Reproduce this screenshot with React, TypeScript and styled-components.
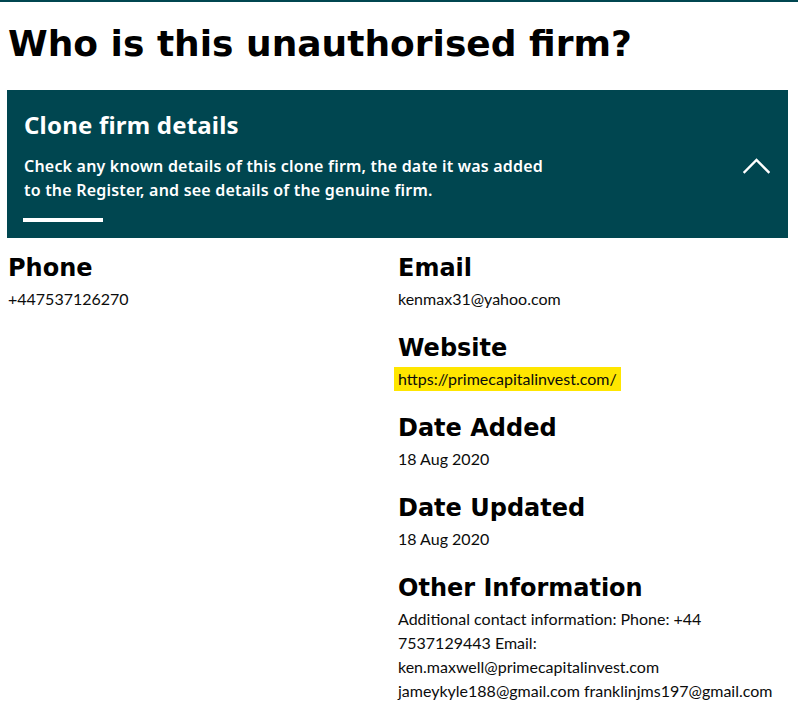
import styled, { createGlobalStyle } from "styled-components";

const GlobalStyle = createGlobalStyle`
  html, body {
    margin: 0;
    padding: 0;
    background: #ffffff;
  }
  body {
    border-top: 2px solid #004650;
    padding: 0 8px;
    font-family: "Lato", "Liberation Sans", sans-serif;
    color: #0b0c0c;
  }
`;

const Page = styled.main`
  display: flex;
  flex-direction: column;
`;

const Title = styled.h1`
  font-family: "DejaVu Sans", Verdana, sans-serif;
  font-weight: 700;
  font-size: 36px;
  line-height: 44px;
  color: #000;
  margin: 20px 0 24px;
`;

const Panel = styled.section`
  background: #004650;
  color: #fff;
  margin: 0 2px 0 -1px;
  padding: 19px 17px 16px;
  display: flex;
  justify-content: space-between;
  align-items: center;
`;

const PanelText = styled.div`
  display: flex;
  flex-direction: column;
  font-family: "Noto Sans", "Open Sans", sans-serif;
`;

const PanelTitle = styled.h2`
  margin: 0;
  font-size: 24px;
  line-height: 32px;
  font-weight: 700;
  letter-spacing: 0.2px;
`;

const PanelBody = styled.p`
  margin: 13px 0 0;
  font-size: 16px;
  line-height: 24px;
  font-weight: 600;
  max-width: 530px;
  letter-spacing: 0.2px;
`;

const Bar = styled.span`
  display: block;
  width: 80px;
  height: 4px;
  background: #fff;
  margin: 16px 0 0 -1px;
`;

const Toggle = styled.button`
  background: none;
  border: 0;
  padding: 0;
  margin-right: 1px;
  display: flex;
  cursor: pointer;
`;

const Details = styled.div`
  display: grid;
  grid-template-columns: 390px 1fr;
  margin-top: 15px;
`;

const Column = styled.div`
  display: flex;
  flex-direction: column;
`;

const Item = styled.div`
  display: flex;
  flex-direction: column;
  margin-bottom: 22px;
`;

const Label = styled.h3`
  font-family: "DejaVu Sans", Verdana, sans-serif;
  font-weight: 700;
  font-size: 24px;
  line-height: 30px;
  color: #000;
  margin: 0 0 4px;
`;

const Value = styled.p<{ $highlight?: boolean }>`
  margin: 0;
  font-size: 16px;
  line-height: 24px;
  color: #0b0c0c;
  align-self: flex-start;
  ${(p) =>
    p.$highlight &&
    `
    background: #ffe600;
    padding: 0 4px;
    margin-left: -4px;
  `}
`;

function Chevron() {
  return (
    <svg width="27" height="16" viewBox="0 0 27 16" fill="none">
      <path
        d="M1.5 14 L13.5 2 L25.5 14"
        stroke="#fff"
        strokeWidth="2.4"
        strokeLinecap="square"
      />
    </svg>
  );
}

export default function App() {
  return (
    <Page>
      <GlobalStyle />
      <Title>Who is this unauthorised firm?</Title>
      <Panel>
        <PanelText>
          <PanelTitle>Clone firm details</PanelTitle>
          <PanelBody>
            Check any known details of this clone firm, the date it was added
            to the Register, and see details of the genuine firm.
          </PanelBody>
          <Bar />
        </PanelText>
        <Toggle aria-label="Collapse">
          <Chevron />
        </Toggle>
      </Panel>
      <Details>
        <Column>
          <Item>
            <Label>Phone</Label>
            <Value>+447537126270</Value>
          </Item>
        </Column>
        <Column>
          <Item>
            <Label>Email</Label>
            <Value>kenmax31@yahoo.com</Value>
          </Item>
          <Item>
            <Label>Website</Label>
            <Value $highlight>https://primecapitalinvest.com/</Value>
          </Item>
          <Item>
            <Label>Date Added</Label>
            <Value>18 Aug 2020</Value>
          </Item>
          <Item>
            <Label>Date Updated</Label>
            <Value>18 Aug 2020</Value>
          </Item>
          <Item>
            <Label>Other Information</Label>
            <Value>
              Additional contact information: Phone: +44 7537129443 Email:
              ken.maxwell@primecapitalinvest.com jameykyle188@gmail.com
              franklinjms197@gmail.com
            </Value>
          </Item>
        </Column>
      </Details>
    </Page>
  );
}
